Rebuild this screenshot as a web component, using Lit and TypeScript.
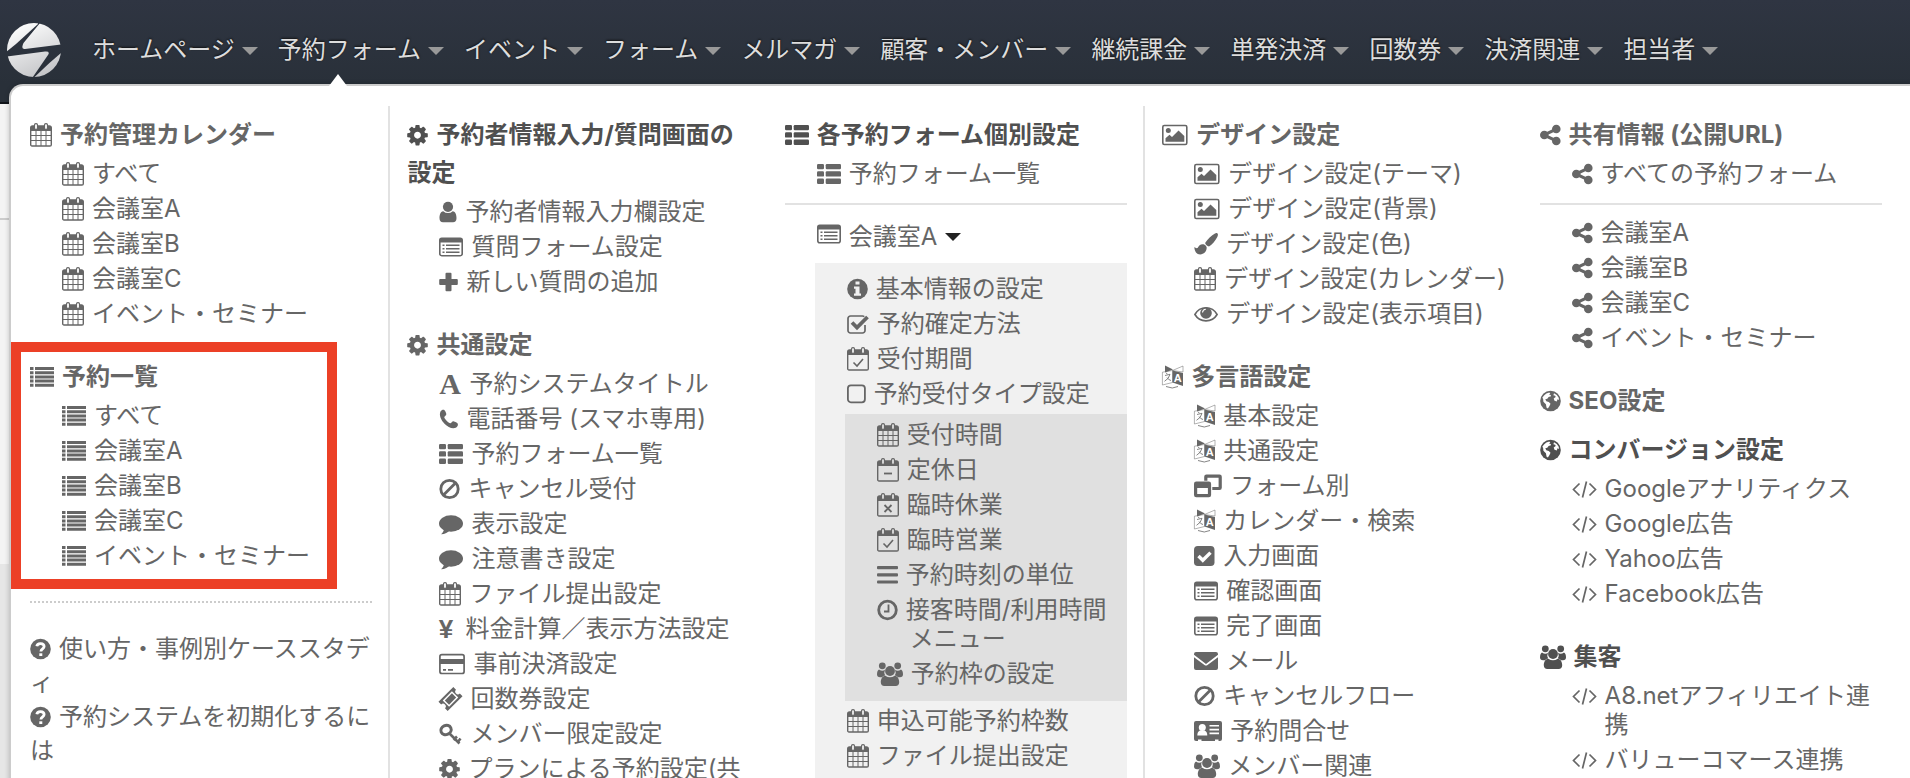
import { LitElement, html, css, svg, nothing, type SVGTemplateResult, type TemplateResult } from "lit";
import { customElement, property } from "lit/decorators.js";

interface Glyph {
  w: number;
  art: SVGTemplateResult;
}

const calendarFrame = svg`
  <path d="M2.500 3h17A1.800 1.800 0 0 1 21.300 4.800V21.700A1.300 1.300 0 0 1 20 23H2A1.300 1.300 0 0 1 .700 21.700V4.800A1.800 1.800 0 0 1 2.500 3Z" fill="none" stroke="currentColor" stroke-width="1.400"/>
  <path d="M1 3h20v5H1z"/>
  <rect x="4.500" y=".700" width="3" height="5.800" rx="1.400" fill="var(--hole)" stroke="currentColor" stroke-width="1.200"/>
  <rect x="14.500" y=".700" width="3" height="5.800" rx="1.400" fill="var(--hole)" stroke="currentColor" stroke-width="1.200"/>`;

const line = (d: string, width: number) =>
  svg`<path d=${d} fill="none" stroke="currentColor" stroke-width=${width}/>`;

const GLYPHS: Record<string, Glyph> = {
  calendar: { w: 22, art: svg`${calendarFrame}${line("M6 8v15M11 8v15M16 8v15M1 12.500h20M1 17.500h20", 1)}` },
  calendarCheck: { w: 22, art: svg`${calendarFrame}${line("M6.500 15.500l3.500 3.500 6-7", 1.6)}` },
  calendarMinus: { w: 22, art: svg`${calendarFrame}${line("M7 15.500h8", 1.8)}` },
  calendarTimes: { w: 22, art: svg`${calendarFrame}${line("M7.500 12l7 7M14.500 12l-7 7", 1.8)}` },
  list: {
    w: 24,
    art: svg`<path d="M0 2h3.500v3H0zM5 2h19v3H5zM0 6.200h3.500v3H0zM5 6.200h19v3H5zM0 10.400h3.500v3H0zM5 10.400h19v3H5zM0 14.600h3.500v3H0zM5 14.600h19v3H5zM0 18.800h3.500v3H0zM5 18.800h19v3H5z"/>`,
  },
  thList: {
    w: 24,
    art: svg`<rect y="2" width="7" height="5.300" rx="1.200"/><rect x="8.700" y="2" width="15.300" height="5.300" rx="1.200"/>
      <rect y="9.300" width="7" height="5.300" rx="1.200"/><rect x="8.700" y="9.300" width="15.300" height="5.300" rx="1.200"/>
      <rect y="16.600" width="7" height="5.300" rx="1.200"/><rect x="8.700" y="16.600" width="15.300" height="5.300" rx="1.200"/>`,
  },
  gear: {
    w: 21,
    art: svg`<path transform="translate(-1.500 .200) scale(.013393)" d="M1152 896q0-106-75-181t-181-75-181 75-75 181 75 181 181 75 181-75 75-181zm512-109v222q0 12-8 23t-20 13l-185 28q-19 54-39 91 35 50 107 138 10 12 10 25t-9 23q-27 37-99 108t-94 71q-12 0-26-9l-138-108q-44 23-91 38-16 136-29 186-7 28-36 28h-222q-14 0-24.500-8.500t-11.500-21.500l-28-184q-49-16-90-37l-141 107q-10 9-25 9-14 0-25-11-126-114-165-168-7-10-7-23 0-12 8-23 15-21 51-66.500t54-70.500q-27-50-41-99l-183-27q-13-2-21-12.500t-8-23.500v-222q0-12 8-23t19-13l186-28q14-46 39-92-40-57-107-138-10-12-10-24 0-10 9-23 26-36 98.500-107.500t94.500-71.500q13 0 26 10l138 107q44-23 91-38 16-136 29-186 7-28 36-28h222q14 0 24.500 8.500t11.500 21.500l28 184q49 16 90 37l142-107q9-9 24-9 13 0 25 10 129 119 165 170 7 8 7 22 0 12-8 23-15 21-51 66.500t-54 70.500q26 50 41 98l183 28q13 2 21 12.500t8 23.500z"/>`,
  },
  user: {
    w: 18,
    art: svg`<circle cx="9" cy="6.800" r="5.100"/><path d="M4.300 11.200a6.800 6.800 0 0 0 9.400 0c3 .300 3.800 4 3.800 7 0 2.500-1.300 4-3.500 4H4c-2.200 0-3.500-1.500-3.500-4 0-3 .800-6.700 3.800-7Z"/>`,
  },
  form: {
    w: 24,
    art: svg`<rect x=".800" y="3.300" width="22.400" height="17.400" rx="2" fill="none" stroke="currentColor" stroke-width="1.600"/><path d="M1 3h22v4.500H1z"/>
      <path d="M3.500 9.500h2v1.600h-2zM3.500 13h2v1.600h-2zM3.500 16.500h2v1.600h-2zM7 9.500h13.500v1.600H7zM7 13h13.500v1.600H7zM7 16.500h13.500v1.600H7z"/>`,
  },
  plus: { w: 19, art: svg`<path d="M7.500 2.700h4q1 0 1 1V9h5.300q1 0 1 1v4q0 1-1 1h-5.300v5.300q0 1-1 1h-4q-1 0-1-1V15H1.200q-1 0-1-1v-4q0-1 1-1h5.300V3.700q0-1 1-1Z"/>` },
  letter: {
    w: 22,
    art: svg`<text x="11" y="22" text-anchor="middle" font-family="Liberation Serif, serif" font-weight="700" font-size="30">A</text>`,
  },
  phone: {
    w: 19,
    art: svg`<path d="M1.500 4.500C2.600 2.600 4 2.500 5 2.800c1 .400 2 3 2.300 4.200.300 1.500-2 2.300-2 3.300 0 1.500 4.300 6 6 6 1.100 0 1.800-2.200 3.200-2 1.400.300 4 1.600 4.300 2.400.500 1.600-.500 3.300-2 4-3.500 1.500-8-.700-11.300-4S-.300 8 1.500 4.500Z"/>`,
  },
  ban: { w: 21, art: svg`<circle cx="10.500" cy="12" r="8.700" fill="none" stroke="currentColor" stroke-width="2.800"/>${line("M4.500 18 16.500 6", 2.8)}` },
  comment: { w: 24, art: svg`<ellipse cx="12" cy="11.500" rx="12" ry="8.300"/><path d="M5 16c0 3-1 4.500-3 6.300 4-.300 7-1.600 9-4.300Z"/>` },
  yen: {
    w: 18,
    art: svg`<text x="7" y="21" text-anchor="middle" font-family="Liberation Sans, sans-serif" font-weight="700" font-size="26">¥</text>`,
  },
  card: {
    w: 26,
    art: svg`<rect x=".900" y="2.700" width="24.200" height="18.800" rx="2" fill="none" stroke="currentColor" stroke-width="1.700"/><path d="M1 7h24v5H1zM4 17h3v1.700H4zM9 17h5v1.700H9z"/>`,
  },
  ticket: {
    w: 23,
    art: svg`<g transform="rotate(-45 11.500 12)"><path fill-rule="evenodd" d="M1 5.500h21v3.800a2.700 2.700 0 0 0 0 5.400v3.800H1v-3.800a2.700 2.700 0 0 0 0-5.400ZM5 7.500v9h13v-9Z"/><path d="M6.500 9h10v6h-10z"/></g>`,
  },
  key: {
    w: 23,
    art: svg`<ellipse cx="7" cy="8" rx="5.300" ry="4.500" transform="rotate(-25 7 8)" fill="none" stroke="currentColor" stroke-width="3"/>${line("M10 11l10.500 10.500M14.500 18l3.500-3.500M18.500 20.500l3-4", 2.6)}`,
  },
  info: {
    w: 21,
    art: svg`<circle cx="10.500" cy="12" r="10.300"/><path fill="var(--hole)" d="M8.500 4.500h4v3h-4zM7 9.500h5.500v7H14v2.300H7v-2.300h1.500v-4.700H7z"/>`,
  },
  question: {
    w: 21,
    art: svg`<circle cx="10.500" cy="12" r="10.300"/><path fill="none" stroke="var(--hole)" stroke-width="2.800" d="M6.800 9.300c.500-3.700 7.300-3.600 7.300.200 0 2.300-3.200 2.300-3.200 5"/><path fill="var(--hole)" d="M9.300 16.300h3v2.700h-3z"/>`,
  },
  checkOutline: {
    w: 22,
    art: svg`<path d="M18 13v5.500a2.500 2.500 0 0 1-2.500 2.500h-12A2.500 2.500 0 0 1 1 18.500v-12A2.500 2.500 0 0 1 3.500 4h12q1 0 1.800.600" fill="none" stroke="currentColor" stroke-width="1.700"/>${line("M5 10.500l5 5L20.500 5", 3.8)}`,
  },
  square: { w: 19, art: svg`<rect x=".900" y="3.300" width="17" height="17" rx="3" fill="none" stroke="currentColor" stroke-width="1.800"/>` },
  checkSquare: {
    w: 21,
    art: svg`<rect y="2" width="20.500" height="20" rx="3.800"/><path d="M4.500 12l4.300 4.300 7.700-7.700" fill="none" stroke="var(--hole)" stroke-width="3.400"/>`,
  },
  bars: { w: 21, art: svg`<rect y="3" width="21" height="3.200" rx="1"/><rect y="10.200" width="21" height="3.200" rx="1"/><rect y="17.400" width="21" height="3.200" rx="1"/>` },
  clock: { w: 21, art: svg`<circle cx="10.500" cy="12" r="8.800" fill="none" stroke="currentColor" stroke-width="2.800"/>${line("M11.500 6.500v7H7", 1.8)}` },
  users: {
    w: 26,
    art: svg`<circle cx="5.300" cy="3.800" r="3.400"/><circle cx="20.700" cy="3.800" r="3.400"/>
      <path d="M2 7.500q3.300 2.300 6 .300-1.500 3 .200 5.700-2 .200-3.200 1.700H3Q0 15 0 12.500q0-4 2-5ZM24 7.500q-3.300 2.300-6 .300 1.500 3-.200 5.700 2 .200 3.200 1.700h2q3-.200 3-2.700 0-4-2-5Z"/>
      <circle cx="13" cy="9" r="4.900"/><path d="M8.300 13.700q4.700 3.300 9.400 0c3.500.300 4.500 4 4.500 6.600 0 2.400-1.300 3.700-3.500 3.700H7.300c-2.200 0-3.500-1.300-3.500-3.700 0-2.600 1-6.300 4.500-6.600Z"/>`,
  },
  image: {
    w: 26,
    art: svg`<rect x=".800" y="2.500" width="24" height="19" rx="1.500" fill="none" stroke="currentColor" stroke-width="1.600"/><circle cx="6.300" cy="7.500" r="2.500"/><path d="M3.500 18.800v-3.500l4-3.500 2.500 2.200 6.500-6.500 5.800 5.500v5.800Z"/>`,
  },
  brush: {
    w: 24,
    art: svg`<path d="M23.300 1.300c1 .900.700 2.300 0 3.600-2 3.700-5 7.700-8.300 9.500-1.800-.300-3.400-1.700-3.900-3.500C13.500 7.300 17.500 3.500 21 1.500c.800-.500 1.700-.800 2.300-.200Z"/><path d="M9.500 12.300c1.600.300 3 1.700 3.200 3.300 0 4-2.900 6.800-6.500 6.800C2.700 22.400.500 19.500.300 15c1.200.800 2.500 1.700 3.500.700 1-2 2.700-3.800 5.700-3.400Z"/>`,
  },
  eye: {
    w: 24,
    art: svg`<path d="M.900 12.500C6 3.500 18 3.500 23.100 12.500 18 21 6 21 .900 12.500Z" fill="none" stroke="currentColor" stroke-width="1.600"/><circle cx="12" cy="11" r="5.800"/><path d="M8.500 10.500q.300-3 3.300-3.200" fill="none" stroke="var(--hole)" stroke-width="1.100"/>`,
  },
  language: {
    w: 21,
    art: svg`<path d="M10.500 5.500 21 1v6L10.500 5.500v12L.400 20V7.200l10.100-1.700" fill="none" stroke="currentColor" stroke-width=".500"/>
      <path d="M3 .500l8 4-8 3zM10.500 5.500 21 8v13l-10.500-3.500z"/>
      <text x="15.700" y="17" text-anchor="middle" font-family="Liberation Sans, sans-serif" font-weight="700" font-size="11" fill="var(--hole)">A</text>
      <path d="M3 10.500l5-1.200q-1 4.500-5.500 7M5 12.500q1.500 2.500 4 3M4 8l1.500 1M4 21.500q6.500 3 12 0" fill="none" stroke="currentColor" stroke-width=".800"/>`,
  },
  windows: {
    w: 28,
    art: svg`<path fill-rule="evenodd" d="M12.500 .500h13A2.300 2.300 0 0 1 27.800 2.800v11a2.300 2.300 0 0 1-2.300 2.300h-7.200v-3.200h6.300V3.700H13.400v3H10.200V2.800A2.300 2.300 0 0 1 12.500 .500Z"/><path fill-rule="evenodd" d="M2.300 7.500h12.500a2.300 2.300 0 0 1 2.300 2.300v11.100a2.300 2.300 0 0 1-2.300 2.300H2.300A2.300 2.300 0 0 1 0 20.900V9.800a2.300 2.300 0 0 1 2.300-2.300ZM3.200 14v6h10.700V14Z"/>`,
  },
  mail: {
    w: 24,
    art: svg`<path d="M2 3h20q2 0 2 2v.800L12 15 0 5.800V5q0-2 2-2ZM0 8.200 10.500 16q1.500 1 3 0L24 8.200V19q0 2-2 2H2q-2 0-2-2Z"/>`,
  },
  vcard: {
    w: 28,
    art: svg`<path d="M2 2h24q2 0 2 2v16q0 2-2 2h-1.500v-1.500H21V22H7.500v-1.500H4V22H2q-2 0-2-2V4q0-2 2-2Z"/><g fill="var(--hole)"><circle cx="8.300" cy="8.500" r="3.500"/><path d="M6 11.500h4.600q2.700 1 2.700 5H3.300q0-4 2.700-5ZM15.500 6H25v1.600h-9.500zM15.500 9.800H25v1.600h-9.500zM15.500 13.600H25v1.600h-9.500z"/></g>`,
  },
  share: {
    w: 21,
    art: svg`<path transform="translate(-1.700 0) scale(.013393)" d="M1344 1024q133 0 226.500 93.500t93.500 226.500-93.500 226.500-226.500 93.500-226.500-93.500-93.500-226.500q0-12 2-34l-360-180q-92 86-218 86-133 0-226.500-93.500t-93.500-226.500 93.500-226.500 226.500-93.500q126 0 218 86l360-180q-2-22-2-34 0-133 93.500-226.500t226.500-93.500 226.500 93.500 93.500 226.500-93.500 226.500-226.500 93.500q-126 0-218-86l-360 180q2 22 2 34t-2 34l360 180q92-86 218-86z"/>`,
  },
  globe: {
    w: 21,
    art: svg`<circle cx="10.500" cy="12" r="10.300"/><path fill="var(--hole)" d="M4 6.500Q6 4.200 9.300 3.600l1 1-1.300 1 1.700.300.300 1.400-2.400.700-1.300 1.700-2 .500 1 2 2.500.700 1.700 1.800-1 2.200-1.600 2.600-1.300-.700-.700-3.600-2.500-2.500-.300-3-.800-1ZM14 4.300q3.200 1.200 4.700 4.400l.300 2.300-1.500-.800-.700 2.300-2.300-.700-.800-2.300 2-1.500-.500-1.300-1.800-.400Z"/>`,
  },
  code: { w: 25, art: svg`${line("M7.500 6.500 1.500 12.500l6 6M17.500 6.500l6 6-6 6M14.500 4.500l-4 16", 1.7)}` },
};

const icon = (name: string): TemplateResult => {
  const g = GLYPHS[name];
  return html`<svg class="icon" width=${g.w} height="24" viewBox="0 0 ${g.w} 24" aria-hidden="true">${g.art}</svg>`;
};

type Entry = [icon: string, label: string];

const entries = (items: Entry[]) =>
  html`${items.map(([name, label]) => html`<li class="entry"><a class="link" href="#">${icon(name)}${label}</a></li>`)}`;

const list = (items: Entry[]) => html`<ul class="entries">${entries(items)}</ul>`;

const heading = (name: string, label: string, strong = false) =>
  html`<h2 class="heading ${strong ? "strong" : ""}">${strong
    ? html`${icon(name)}${label}`
    : html`<a class="link" href="#">${icon(name)}${label}</a>`}</h2>`;

const rooms = (name: string): Entry[] => [
  [name, "会議室A"],
  [name, "会議室B"],
  [name, "会議室C"],
  [name, "イベント・セミナー"],
];

@customElement("mega-menu")
export class MegaMenu extends LitElement {
  static styles = css`
    :host {
      display: block;
      --hole: #fff;
      color: #666;
      font-size: 24px;
      line-break: anywhere;
    }
    .columns {
      display: grid;
      grid-template-columns: repeat(5, minmax(0, 1fr));
      padding: 20px 12px 0 0;
    }
    .column {
      min-height: 100vh;
      padding: 10px 16px 0 17px;
      border-left: 2px solid transparent;
      box-sizing: border-box;
    }
    .ruled {
      border-left-color: #e2e2e2;
    }
    .group + .group {
      margin-top: 26px;
    }
    .single + .group {
      margin-top: 11px;
    }
    .heading {
      margin: 0;
      font-size: 24px;
      line-height: 38px;
      font-weight: 700;
    }
    .strong {
      color: #505050;
    }
    .link {
      color: inherit;
      text-decoration: none;
    }
    .entries {
      list-style: none;
      margin: 3px 0 0;
      padding: 0;
    }
    .entry {
      margin: 0 -10px 0 32px;
      padding: 2px 0 4px 33px;
      text-indent: -33px;
      line-height: 29px;
    }
    .icon {
      vertical-align: -4px;
      margin-right: 8px;
      fill: currentColor;
      overflow: visible;
    }
    .rule {
      margin: 11px 0;
      border: 0;
      border-top: 2px solid #e2e2e2;
    }
    .rule + .entries {
      margin-top: 0;
    }
    .dotted {
      margin: 27px 0 29px;
      border: 0;
      border-top: 2px dotted #ccc;
    }
    .help {
      margin: 0;
      line-height: 34px;
    }
    .marked {
      position: relative;
    }
    .marker {
      position: absolute;
      inset: -16px 35px -15px -19px;
      border: 10px solid #ec4026;
      pointer-events: none;
    }
    .toggle {
      display: flex;
      align-items: center;
      height: 38px;
      margin: 0 0 9px 32px;
      padding: 0 0 2px;
      border: 0;
      background: none;
      color: inherit;
      font: inherit;
    }
    .toggle::after {
      content: "";
      margin: 6px 0 0 8px;
      border: 8px solid transparent;
      border-top-color: #222;
      border-bottom: 0;
    }
    .panel {
      --hole: #f1f1f1;
      margin-left: 30px;
      padding: 9px 0;
      background: #f1f1f1;
    }
    .panel .entries {
      margin: 0;
    }
    .nested {
      --hole: #e0e0e0;
      margin: 2px 0 3px 30px;
      padding: 4px 16px 9px 0;
      background: #e0e0e0;
    }
  `;

  render() {
    return html`
      <div class="columns">
        <div class="column">
          <section class="group">
            ${heading("calendar", "予約管理カレンダー")}
            ${list([["calendar", "すべて"], ...rooms("calendar")])}
          </section>
          <section class="group marked">
            ${heading("list", "予約一覧")}
            ${list([["list", "すべて"], ...rooms("list")])}
            <span class="marker"></span>
          </section>
          <hr class="dotted" />
          <p class="help"><a class="link" href="#">${icon("question")}使い方・事例別ケーススタディ</a></p>
          <p class="help"><a class="link" href="#">${icon("question")}予約システムを初期化するには</a></p>
        </div>
        <div class="column ruled">
          <section class="group">
            ${heading("gear", "予約者情報入力/質問画面の設定", true)}
            ${list([
              ["user", "予約者情報入力欄設定"],
              ["form", "質問フォーム設定"],
              ["plus", "新しい質問の追加"],
            ])}
          </section>
          <section class="group">
            ${heading("gear", "共通設定")}
            ${list([
              ["letter", "予約システムタイトル"],
              ["phone", "電話番号 (スマホ専用)"],
              ["thList", "予約フォーム一覧"],
              ["ban", "キャンセル受付"],
              ["comment", "表示設定"],
              ["comment", "注意書き設定"],
              ["calendar", "ファイル提出設定"],
              ["yen", "料金計算／表示方法設定"],
              ["card", "事前決済設定"],
              ["ticket", "回数券設定"],
              ["key", "メンバー限定設定"],
              ["gear", "プランによる予約設定(共"],
            ])}
          </section>
        </div>
        <div class="column">
          <section class="group">
            ${heading("thList", "各予約フォーム個別設定", true)}
            ${list([["thList", "予約フォーム一覧"]])}
            <hr class="rule" />
            <button class="toggle" type="button" aria-expanded="true">${icon("form")}会議室A</button>
            <div class="panel">
              ${list([
                ["info", "基本情報の設定"],
                ["checkOutline", "予約確定方法"],
                ["calendarCheck", "受付期間"],
                ["square", "予約受付タイプ設定"],
              ])}
              <div class="nested">
                ${list([
                  ["calendar", "受付時間"],
                  ["calendarMinus", "定休日"],
                  ["calendarTimes", "臨時休業"],
                  ["calendarCheck", "臨時営業"],
                  ["bars", "予約時刻の単位"],
                  ["clock", "接客時間/利用時間メニュー"],
                  ["users", "予約枠の設定"],
                ])}
              </div>
              ${list([
                ["calendar", "申込可能予約枠数"],
                ["calendar", "ファイル提出設定"],
              ])}
            </div>
          </section>
        </div>
        <div class="column ruled">
          <section class="group">
            ${heading("image", "デザイン設定")}
            ${list([
              ["image", "デザイン設定(テーマ)"],
              ["image", "デザイン設定(背景)"],
              ["brush", "デザイン設定(色)"],
              ["calendar", "デザイン設定(カレンダー)"],
              ["eye", "デザイン設定(表示項目)"],
            ])}
          </section>
          <section class="group">
            ${heading("language", "多言語設定")}
            ${list([
              ["language", "基本設定"],
              ["language", "共通設定"],
              ["windows", "フォーム別"],
              ["language", "カレンダー・検索"],
              ["checkSquare", "入力画面"],
              ["form", "確認画面"],
              ["form", "完了画面"],
              ["mail", "メール"],
              ["ban", "キャンセルフロー"],
              ["vcard", "予約問合せ"],
              ["users", "メンバー関連"],
            ])}
          </section>
        </div>
        <div class="column">
          <section class="group">
            ${heading("share", "共有情報 (公開URL)")}
            ${list([["share", "すべての予約フォーム"]])}
            <hr class="rule" />
            ${list(rooms("share"))}
          </section>
          <section class="group single">${heading("globe", "SEO設定")}</section>
          <section class="group">
            ${heading("globe", "コンバージョン設定", true)}
            ${list([
              ["code", "Googleアナリティクス"],
              ["code", "Google広告"],
              ["code", "Yahoo広告"],
              ["code", "Facebook広告"],
            ])}
          </section>
          <section class="group">
            ${heading("users", "集客", true)}
            ${list([
              ["code", "A8.netアフィリエイト連携"],
              ["code", "バリューコマース連携"],
            ])}
          </section>
        </div>
      </div>
    `;
  }
}

const NAV = [
  "ホームページ",
  "予約フォーム",
  "イベント",
  "フォーム",
  "メルマガ",
  "顧客・メンバー",
  "継続課金",
  "単発決済",
  "回数券",
  "決済関連",
  "担当者",
];

@customElement("app-root")
export class AppRoot extends LitElement {
  @property() open = "予約フォーム";

  static styles = css`
    :host {
      display: block;
      position: relative;
      height: 100vh;
      overflow: hidden;
      background: #f4f4f4;
      font-family: Inter, "Noto Sans CJK JP", sans-serif;
      font-size: 24px;
    }
    .bar {
      display: flex;
      align-items: center;
      height: 104px;
      padding: 0 7px 2px;
      box-sizing: border-box;
      border-bottom: 2px solid #10141a;
      background: linear-gradient(#2f3542, #293039 84px);
    }
    .logo {
      display: block;
      width: 54px;
      height: 54px;
    }
    .nav {
      display: flex;
      gap: 20px;
      height: 100%;
      margin-left: 31px;
    }
    .item {
      position: relative;
      display: flex;
      align-items: center;
      padding: 0 0 6px;
      border: 0;
      background: none;
      color: #ddd;
      font: inherit;
      white-space: nowrap;
      text-shadow: 0 -1px 2px #111;
    }
    .item::after {
      content: "";
      margin: 8px 0 0 7px;
      border: 8px solid transparent;
      border-top-color: #999;
      border-bottom: 0;
    }
    .pointer {
      position: absolute;
      top: 74px;
      left: 51px;
      z-index: 2;
      border: 9px solid transparent;
      border-top: 0;
      border-bottom: 12px solid #fff;
    }
    .backdrop {
      height: 114px;
      border-bottom: 2px solid #ccc;
    }
    .lower {
      height: 344px;
    }
    .footer {
      height: 100%;
      background: #e6e6e6;
    }
    .menu {
      position: absolute;
      top: 84px;
      left: 9px;
      right: 0;
      border: solid #ccc;
      border-width: 2px 0 0 2px;
      border-radius: 14px 0 0 0;
      background: #fff;
      box-shadow: 0 0 5px rgba(0, 0, 0, 0.2);
    }
  `;

  render() {
    return html`
      <header class="bar">
        <svg class="logo" viewBox="0 0 54 54" role="img" aria-label="ロゴ">
          <defs>
            <linearGradient id="silver" gradientUnits="userSpaceOnUse" x1="10" y1="0" x2="34" y2="54">
              <stop offset="0" stop-color="#fff" />
              <stop offset="1" stop-color="#c4c5c8" />
            </linearGradient>
            <clipPath id="disc"><circle cx="27" cy="27" r="27" /></clipPath>
          </defs>
          <g clip-path="url(#disc)" fill="url(#silver)">
            <path d="M-1 29 9 21 31 1V-2H-1Z" />
            <path d="M33 0 16.500 20Q13.500 26.500 18 26L54 21.500V-2H33Z" />
            <path d="M0 33.500 38 28.500Q43.500 28 41 32L25.500 54.500H0Z" />
            <path d="M55 29 43 39.500 26.500 55H55Z" />
          </g>
        </svg>
        <nav class="nav">
          ${NAV.map(
            (label) => html`<button class="item" type="button" aria-expanded=${label === this.open}>
              ${label}${label === this.open ? html`<span class="pointer"></span>` : nothing}
            </button>`,
          )}
        </nav>
      </header>
      <div class="backdrop"></div>
      <div class="lower"></div>
      <div class="footer"></div>
      <mega-menu class="menu" lang="ja"></mega-menu>
    `;
  }
}
